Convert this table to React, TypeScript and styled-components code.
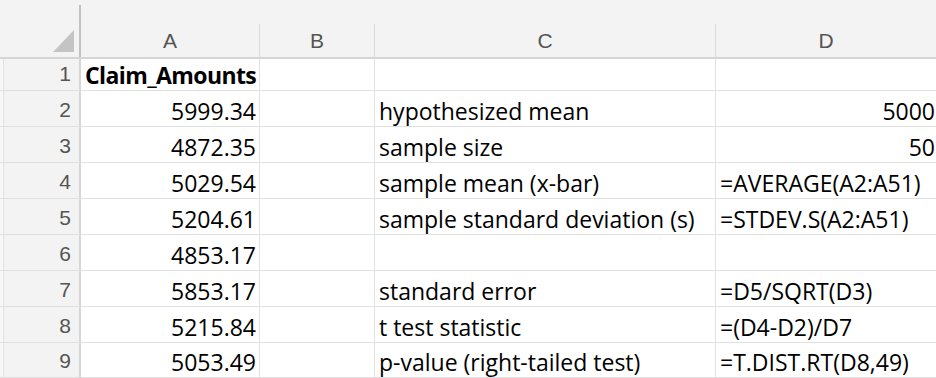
import { createGlobalStyle } from 'styled-components'
import styled from 'styled-components'

const GlobalStyle = createGlobalStyle`
  html, body {
    margin: 0;
    padding: 0;
    background: #ffffff;
    overflow: hidden;
  }
`

const CELL_FONT = `'Open Sans', 'Lato', sans-serif`
const HEAD_FONT = `'Liberation Sans', Arial, sans-serif`

const Sheet = styled.div`
  display: grid;
  grid-template-columns: 81px 179px 115px 341px 1fr;
  grid-template-rows: 24px 35px 32px repeat(7, 36px) 35px;
  width: 936px;
  height: 378px;
  overflow: hidden;
`

const Corner = styled.div`
  grid-row: 1 / 3;
  grid-column: 1;
  position: relative;
  background: #f3f3f3;
  border-bottom: 2px solid #d5d5d5;

  &::after {
    content: '';
    position: absolute;
    right: 0;
    top: 5px;
    bottom: 0;
    width: 2px;
    background: #c2c2c2;
  }
`

const SelectAll = styled.svg`
  position: absolute;
  left: 53px;
  top: 30px;
`

const TopStrip = styled.div`
  grid-row: 1;
  grid-column: 2 / -1;
  background: #f3f3f3;
`

const ColHead = styled.div<{ last?: boolean }>`
  display: flex;
  align-items: center;
  justify-content: center;
  padding-top: 1px;
  background: #f3f3f3;
  border-bottom: 2px solid #d5d5d5;
  border-right: ${({ last }) => (last ? 'none' : '1px solid #dadada')};
  font-family: ${HEAD_FONT};
  font-size: 21px;
  color: #555555;
`

const RowHead = styled.div`
  display: flex;
  align-items: flex-end;
  justify-content: flex-end;
  padding: 0 8px 3px 0;
  background: #f3f3f3;
  border-bottom: 1px solid #e0e0e0;
  border-right: 2px solid #d6d6d6;
  box-shadow: inset 3px 0 0 #f7f7f7, inset 4px 0 0 #e2e2e2;
  font-family: ${HEAD_FONT};
  font-size: 21px;
  line-height: 26px;
  color: #555555;
`

const Cell = styled.div<{ align?: 'left' | 'right'; bold?: boolean; last?: boolean }>`
  display: flex;
  align-items: flex-end;
  justify-content: ${({ align }) => (align === 'right' ? 'flex-end' : 'flex-start')};
  padding: 0 ${({ last }) => (last ? '1px' : '3px')} 0 4px;
  border-bottom: 1px solid #e1e1e1;
  border-right: ${({ last }) => (last ? 'none' : '1px solid #e1e1e1')};
  font-family: ${CELL_FONT};
  font-size: 23px;
  line-height: 30px;
  font-weight: ${({ bold }) => (bold ? 700 : 400)};
  letter-spacing: ${({ bold }) => (bold ? '-0.6px' : 'normal')};
  color: #000000;
  white-space: nowrap;
  overflow: visible;
`

type Value = { text: string; align?: 'left' | 'right'; bold?: boolean }

const rows: Value[][] = [
  [{ text: 'Claim_Amounts', bold: true }, { text: '' }, { text: '' }, { text: '' }],
  [{ text: '5999.34', align: 'right' }, { text: '' }, { text: 'hypothesized mean' }, { text: '5000', align: 'right' }],
  [{ text: '4872.35', align: 'right' }, { text: '' }, { text: 'sample size' }, { text: '50', align: 'right' }],
  [{ text: '5029.54', align: 'right' }, { text: '' }, { text: 'sample mean (x-bar)' }, { text: '=AVERAGE(A2:A51)' }],
  [{ text: '5204.61', align: 'right' }, { text: '' }, { text: 'sample standard deviation (s)' }, { text: '=STDEV.S(A2:A51)' }],
  [{ text: '4853.17', align: 'right' }, { text: '' }, { text: '' }, { text: '' }],
  [{ text: '5853.17', align: 'right' }, { text: '' }, { text: 'standard error' }, { text: '=D5/SQRT(D3)' }],
  [{ text: '5215.84', align: 'right' }, { text: '' }, { text: 't test statistic' }, { text: '=(D4-D2)/D7' }],
  [{ text: '5053.49', align: 'right' }, { text: '' }, { text: 'p-value (right-tailed test)' }, { text: '=T.DIST.RT(D8,49)' }],
]

const columns = ['A', 'B', 'C', 'D']

export default function App() {
  return (
    <>
      <GlobalStyle />
      <Sheet>
        <Corner>
          <SelectAll width="21" height="22" viewBox="0 0 21 22">
            <polygon points="0,22 21,22 21,0" fill="#c4c4c4" />
          </SelectAll>
        </Corner>
        <TopStrip />
        {columns.map((col, i) => (
          <ColHead key={col} last={i === columns.length - 1}>
            {col}
          </ColHead>
        ))}
        {rows.map((row, r) => (
          <>
            <RowHead key={`h${r}`}>{r + 1}</RowHead>
            {row.map((cell, c) => (
              <Cell
                key={`${r}-${c}`}
                align={cell.align}
                bold={cell.bold}
                last={c === row.length - 1}
              >
                {cell.text}
              </Cell>
            ))}
          </>
        ))}
      </Sheet>
    </>
  )
}
